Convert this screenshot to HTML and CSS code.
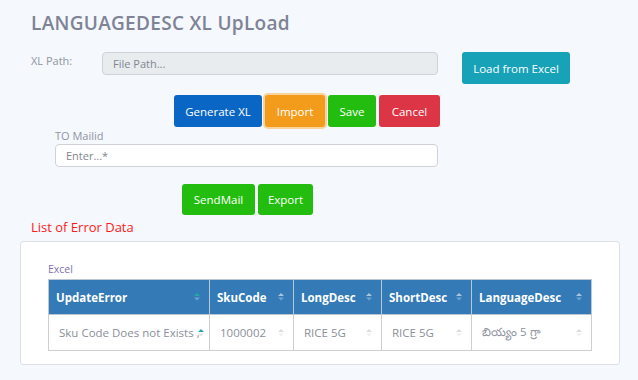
FILE: index.html
```html
<!DOCTYPE html>
<html lang="en">
<head>
  <meta charset="UTF-8">
  <title>LANGUAGEDESC XL UpLoad</title>
  <link rel="stylesheet" href="styles.css">
</head>
<body>
  <div class="page">
    <h1 class="title">LANGUAGEDESC XL UpLoad</h1>

    <div class="path-row">
      <label class="path-label" for="file-path">XL Path:</label>
      <input type="text" id="file-path" class="path-input" placeholder="File Path..." readonly>
      <button class="btn btn-teal btn-load">Load from Excel</button>
    </div>

    <div class="actions">
      <button class="btn btn-blue">Generate XL</button>
      <button class="btn btn-orange">Import</button>
      <button class="btn btn-green">Save</button>
      <button class="btn btn-red">Cancel</button>
    </div>

    <div class="mail">
      <label for="mailid" class="mail-label">TO Mailid</label>
      <input type="text" id="mailid" class="mail-input" placeholder="Enter...*">
    </div>

    <div class="mail-actions">
      <button class="btn btn-green">SendMail</button>
      <button class="btn btn-green">Export</button>
    </div>

    <h2 class="error-title">List of Error Data</h2>

    <div class="card">
      <div class="card-caption">Excel</div>
      <table class="grid">
        <thead>
          <tr>
            <th class="col-err">UpdateError<span class="sort"><svg width="6" height="9" viewBox="0 0 6 9"><path d="M0 4L3 1L6 4Z" fill="#26a8a8"/><path d="M0 5.5L3 8.5L6 5.5Z" fill="#6fa3c9"/></svg></span></th>
            <th class="col-sku">SkuCode<span class="sort"><svg width="6" height="9" viewBox="0 0 6 9"><path d="M0 4L3 1L6 4Z" fill="#a9c6e0"/><path d="M0 5.5L3 8.5L6 5.5Z" fill="#6fa3c9"/></svg></span></th>
            <th class="col-long">LongDesc<span class="sort"><svg width="6" height="9" viewBox="0 0 6 9"><path d="M0 4L3 1L6 4Z" fill="#a9c6e0"/><path d="M0 5.5L3 8.5L6 5.5Z" fill="#6fa3c9"/></svg></span></th>
            <th class="col-short">ShortDesc<span class="sort"><svg width="6" height="9" viewBox="0 0 6 9"><path d="M0 4L3 1L6 4Z" fill="#a9c6e0"/><path d="M0 5.5L3 8.5L6 5.5Z" fill="#6fa3c9"/></svg></span></th>
            <th class="col-lang">LanguageDesc<span class="sort"><svg width="6" height="9" viewBox="0 0 6 9"><path d="M0 4L3 1L6 4Z" fill="#a9c6e0"/><path d="M0 5.5L3 8.5L6 5.5Z" fill="#6fa3c9"/></svg></span></th>
          </tr>
        </thead>
        <tbody>
          <tr>
            <td>Sku Code Does not Exists ,<span class="sort"><svg width="6" height="9" viewBox="0 0 6 9"><path d="M0 4L3 1L6 4Z" fill="#26a8a8"/><path d="M0 5.5L3 8.5L6 5.5Z" fill="#e3e3e3"/></svg></span></td>
            <td>1000002<span class="sort"><svg width="6" height="9" viewBox="0 0 6 9"><path d="M0 4L3 1L6 4Z" fill="#dcdcdc"/><path d="M0 5.5L3 8.5L6 5.5Z" fill="#f0f0f0"/></svg></span></td>
            <td>RICE 5G<span class="sort"><svg width="6" height="9" viewBox="0 0 6 9"><path d="M0 4L3 1L6 4Z" fill="#dcdcdc"/><path d="M0 5.5L3 8.5L6 5.5Z" fill="#f0f0f0"/></svg></span></td>
            <td>RICE 5G<span class="sort"><svg width="6" height="9" viewBox="0 0 6 9"><path d="M0 4L3 1L6 4Z" fill="#dcdcdc"/><path d="M0 5.5L3 8.5L6 5.5Z" fill="#f0f0f0"/></svg></span></td>
            <td>బియ్యం 5 గ్రా<span class="sort"><svg width="6" height="9" viewBox="0 0 6 9"><path d="M0 4L3 1L6 4Z" fill="#dcdcdc"/><path d="M0 5.5L3 8.5L6 5.5Z" fill="#f0f0f0"/></svg></span></td>
          </tr>
        </tbody>
      </table>
    </div>
  </div>
</body>
</html>
```

FILE: styles.css
```css
body {
  margin: 0;
  background-color: #f5f8fd;
  font-family: "Open Sans", "Noto Sans", sans-serif;
  color: #7d8292;
}
.page {
  padding: 8px 0 0 0;
  width: 638px;
  height: 372px;
  box-sizing: border-box;
}
.title {
  margin: 0 0 0 31px;
  font-size: 19px;
  line-height: 30px;
  font-weight: 600;
  color: #7e8396;
  letter-spacing: 0.3px;
}
.path-row {
  display: flex;
  align-items: flex-start;
  margin: 14px 0 0 31px;
}
.path-label {
  width: 71px;
  font-size: 11px;
  line-height: 18px;
  color: #8f95a3;
}
.path-input {
  width: 336px;
  height: 23px;
  box-sizing: border-box;
  padding: 0 10px;
  border: 1px solid #cfd3d8;
  border-radius: 4px;
  background-color: #e9ecef;
  font-family: inherit;
  font-size: 11px;
  color: #7d8292;
}
.path-input::placeholder, .mail-input::placeholder {
  color: #80868f;
}
.btn {
  height: 32px;
  padding: 0;
  border: none;
  border-radius: 3px;
  color: #fff;
  font-family: inherit;
  font-size: 11.5px;
  font-weight: 500;
  white-space: nowrap;
}
.btn-load {
  margin-left: 24px;
  width: 108px;
}
.btn-teal { background-color: #17a2b8; }
.btn-blue { background-color: #0a66c4; }
.btn-orange {
  background-color: #f39b1b;
  box-shadow: 0 0 0 2px #f8d39c;
}
.btn-green { background-color: #22bd0e; }
.btn-red { background-color: #dc3545; }
.actions {
  display: flex;
  gap: 3px;
  margin: 11px 0 0 174px;
}
.actions .btn-blue { width: 88px; }
.actions .btn-orange { width: 60px; }
.actions .btn-green { width: 48px; }
.actions .btn-red { width: 61px; }
.mail {
  margin: 1px 0 0 55px;
}
.mail-label {
  display: block;
  font-size: 11px;
  line-height: 15px;
  color: #8f95a3;
}
.mail-input {
  display: block;
  width: 383px;
  height: 23px;
  box-sizing: border-box;
  margin-top: 1px;
  padding: 0 10px;
  border: 1px solid #cfd3d8;
  border-radius: 4px;
  background-color: #fff;
  font-family: inherit;
  font-size: 11px;
}
.mail-actions {
  display: flex;
  gap: 3px;
  margin: 17px 0 0 182px;
}
.mail-actions .btn { height: 31px; }
.mail-actions .btn:first-child { width: 73px; }
.mail-actions .btn:last-child { width: 55px; }
.error-title {
  margin: 2px 0 0 31px;
  font-size: 13px;
  line-height: 20px;
  font-weight: 400;
  color: #ff1a1a;
}
.card {
  margin: 4px 0 0 20px;
  width: 600px;
  height: 124px;
  box-sizing: border-box;
  padding: 17px 0 0 27px;
  background-color: #fff;
  border: 1px solid #dcdfe3;
  border-radius: 3px;
}
.card-caption {
  font-size: 10.5px;
  line-height: 20px;
  color: #7d73b0;
}
.grid {
  border-collapse: collapse;
  width: 543px;
  table-layout: fixed;
  font-size: 11.5px;
}
.grid th, .grid td {
  position: relative;
  box-sizing: border-box;
  border: 1px solid #cfcfcf;
  text-align: left;
  padding: 0 7px;
  white-space: nowrap;
  overflow: hidden;
}
.grid th {
  height: 35px;
  background-color: #337ab7;
  color: #fff;
  font-weight: 700;
  border-color: #b9c7d4;
}
.grid td {
  height: 36px;
  padding: 0 10px;
  color: #8a8f99;
}
.col-err { width: 161px; }
.col-sku { width: 84px; }
.col-long { width: 88px; }
.col-short { width: 90px; }
.col-lang { width: 120px; }
.sort {
  position: absolute;
  right: 9px;
  top: 50%;
  margin-top: -5px;
  line-height: 0;
}
.grid td:first-child .sort {
  right: 5px;
}
```
